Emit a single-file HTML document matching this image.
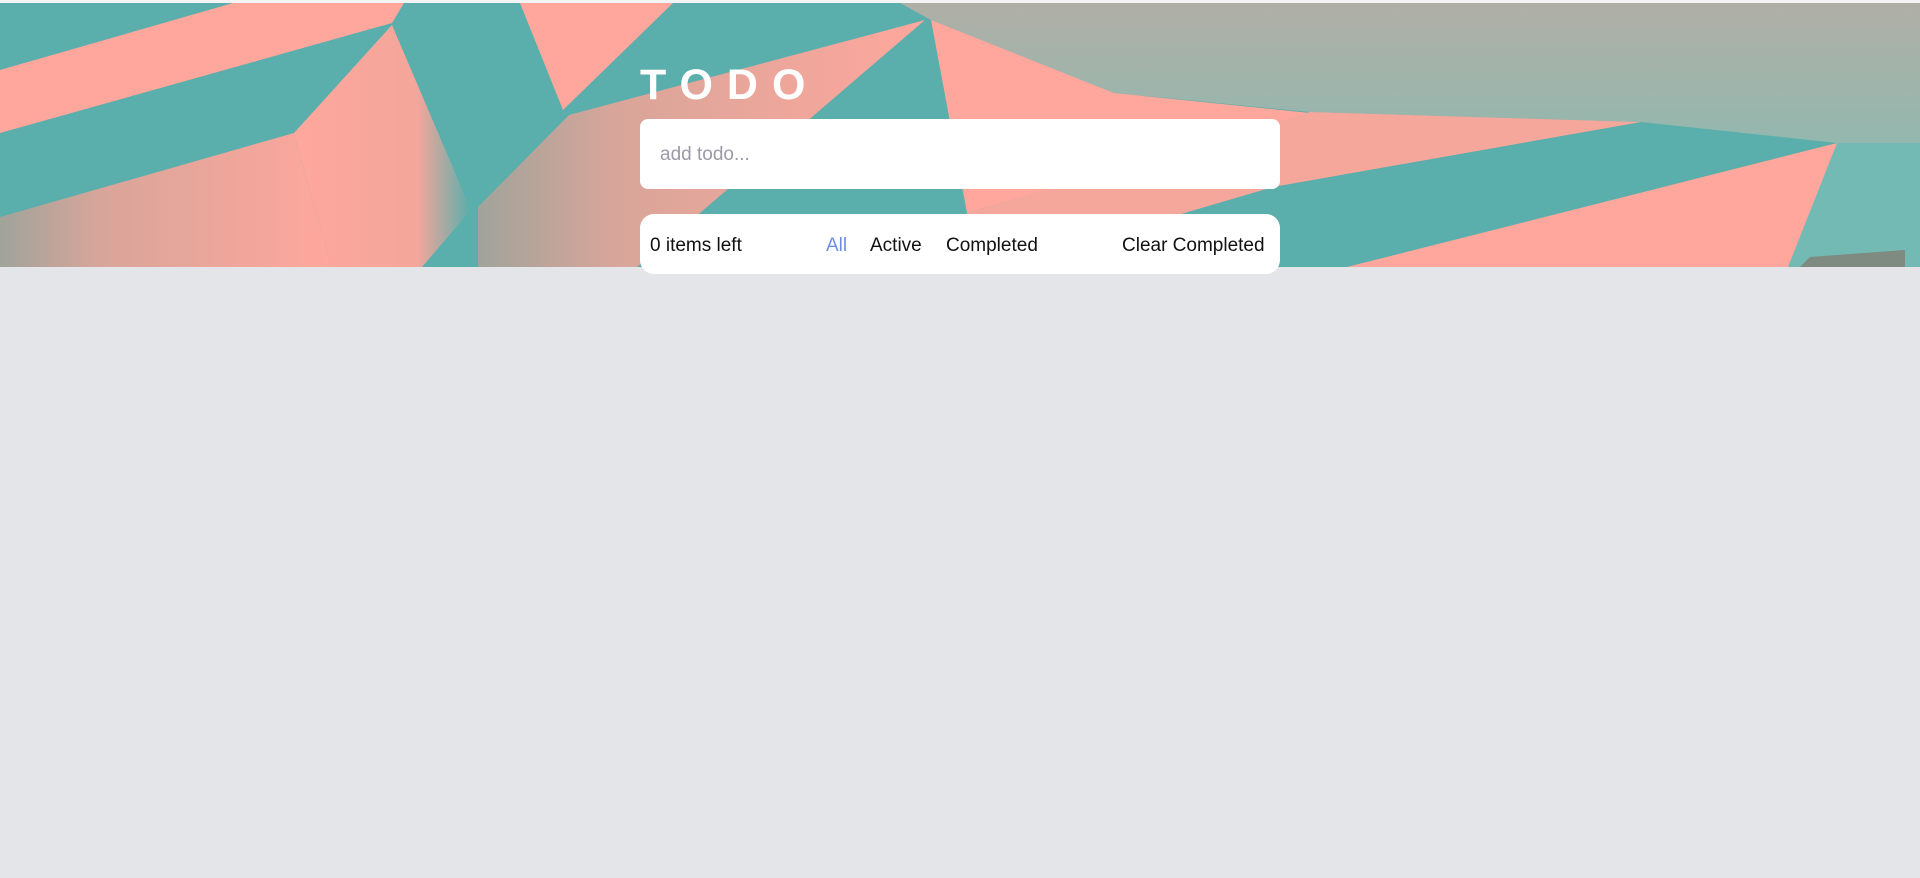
<!DOCTYPE html>
<html><head><meta charset="utf-8"><style>
html,body{margin:0;padding:0;}
body{width:1920px;height:878px;background:#e4e5e9;font-family:"Liberation Sans",sans-serif;position:relative;overflow:hidden;}
.hdr{position:absolute;left:0;top:3px;width:1920px;height:264px;overflow:hidden;background:#5aaeab;}
.top{position:absolute;left:0;top:0;width:1920px;height:3px;background:#f4f4f4;}
h1{position:absolute;left:640px;top:60px;margin:0;color:#fff;font-size:43px;font-weight:bold;letter-spacing:14px;line-height:50px;}
.inp{position:absolute;left:640px;top:119px;width:640px;height:70px;background:#fff;border-radius:8px;}
.inp span{position:absolute;left:20px;top:25px;font-size:19px;color:#9b9aa6;}
.ft{position:absolute;left:640px;top:214px;width:640px;height:60px;background:#fff;border-radius:14px;font-size:19px;color:#111;}
.ft span{position:absolute;top:21px;}
</style></head><body>
<div class="top"></div>
<div class="hdr">
<svg width="1920" height="264" viewBox="0 3 1920 264" style="position:absolute;left:0;top:0">
<defs>
<linearGradient id="g" x1="0" y1="0" x2="0" y2="1"><stop offset="0" stop-color="#b0afa6"/><stop offset="1" stop-color="#93b8ae"/></linearGradient>
<linearGradient id="p1" x1="0" y1="0" x2="1" y2="0"><stop offset="0" stop-color="#ffa79c"/><stop offset="0.7" stop-color="#f3a69b"/><stop offset="1" stop-color="#5aaeab"/></linearGradient>
<linearGradient id="p2" x1="1" y1="0" x2="0" y2="0"><stop offset="0" stop-color="#ffa79c"/><stop offset="0.7" stop-color="#d8a59a"/><stop offset="1" stop-color="#a0a49a"/></linearGradient>
</defs>
<polygon points="900,3 1920,3 1920,143 1837,143 1641,122 1310,112 1114,93 931,20" fill="url(#g)"/>
<polygon points="1837,143 1920,143 1920,267 1780,267" fill="#72bab3"/>
<polygon points="0,70 233,3 404,3 392,23 0,133" fill="#ffa79c"/>
<polygon points="294,133 392,25 471,210 422,267 331,267" fill="url(#p1)"/>
<polygon points="520,3 673,3 563,110" fill="#ffa79c"/>
<polygon points="569,115 925,20 637,267 478,267 478,207" fill="url(#p2)"/>
<polygon points="931,20 1114,93 1310,113 967,213" fill="#ffa79c"/>
<polygon points="967,213 1310,112 1641,122 1273,187 1000,267 967,267" fill="#f6a79c"/>
<polygon points="1347,267 1837,143 1788,267" fill="#ffa79c"/>
<polygon points="0,217 294,133 331,267 0,267" fill="url(#p2)"/>
<polygon points="1810,257 1905,250 1905,267 1800,267" fill="#7f8a80"/>
</svg>
</div>
<h1>TODO</h1>
<div class="inp"><span>add todo...</span></div>
<div class="ft">
<span style="left:10px">0 items left</span>
<span style="left:186px;color:#6c8fe6">All</span>
<span style="left:230px">Active</span>
<span style="left:306px">Completed</span>
<span style="left:482px">Clear Completed</span>
</div>
</body></html>
